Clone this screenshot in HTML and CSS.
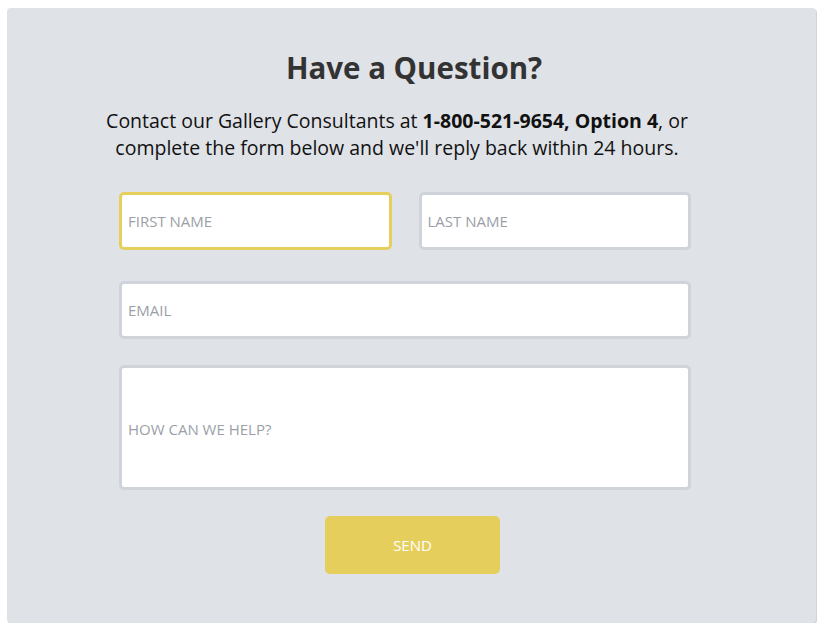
FILE: index.html
```html
<!DOCTYPE html>
<html>
<head>
<meta charset="utf-8">
<link rel="stylesheet" href="styles.css">
</head>
<body>
<div class="panel">
  <h1 class="title">Have a Question?</h1>
  <p class="intro">Contact our Gallery Consultants at <b>1-800-521-9654, Option 4</b>, or<br>complete the form below and we'll reply back within 24 hours.</p>
  <form class="form">
    <div class="row">
      <input class="field focused" type="text" placeholder="FIRST NAME">
      <input class="field" type="text" placeholder="LAST NAME">
    </div>
    <input class="field email" type="email" placeholder="EMAIL">
    <textarea class="field area" placeholder="HOW CAN WE HELP?"></textarea>
    <button class="send" type="button">SEND</button>
  </form>
</div>
</body>
</html>
```
FILE: styles.css
```css
html, body {
  margin: 0;
  padding: 0;
  background: #ffffff;
}
body {
  padding: 8px 8px 0 7px;
  font-family: "Open Sans", "Liberation Sans", sans-serif;
}
.panel {
  box-sizing: border-box;
  width: 809px;
  height: 615px;
  background: #dfe2e7;
  border-radius: 4px;
  box-shadow: 1px 1px 0 #cfd3da;
  display: flex;
  flex-direction: column;
  align-items: center;
  padding-top: 40px;
}
.title {
  margin: 0 0 0 5px;
  font-size: 29.5px;
  line-height: 40px;
  font-weight: 700;
  color: #333333;
}
.intro {
  margin: 19px 0 0 -29px;
  font-size: 19.5px;
  line-height: 27px;
  color: #111111;
  text-align: center;
}
.intro b {
  font-weight: 700;
}
.form {
  width: 572px;
  margin: 31px 0 0 -13px;
  display: flex;
  flex-direction: column;
  align-items: stretch;
}
.row {
  display: flex;
  gap: 27px;
}
.row .field {
  flex: 1;
  min-width: 0;
}
.field {
  box-sizing: border-box;
  height: 58px;
  border: 3px solid #cfd3da;
  border-radius: 5px;
  background: #ffffff;
  padding: 0 6px;
  font-family: "Open Sans", "Liberation Sans", sans-serif;
  font-size: 15px;
  color: #333;
  outline: none;
  margin: 0;
}
.field::placeholder {
  color: #9b9fa7;
  opacity: 1;
}
.focused {
  border-color: #e6cf5d;
}
.email {
  margin-top: 31px;
}
.area {
  height: 125px;
  margin-top: 26px;
  resize: none;
  padding-top: 51px;
  line-height: 20px;
}
.send {
  align-self: center;
  margin: 26px 0 0 15px;
  width: 175px;
  height: 58px;
  border: none;
  border-radius: 5px;
  background: #e5ce5c;
  color: #ffffff;
  font-family: "Open Sans", "Liberation Sans", sans-serif;
  font-size: 15px;
  cursor: pointer;
}
```
